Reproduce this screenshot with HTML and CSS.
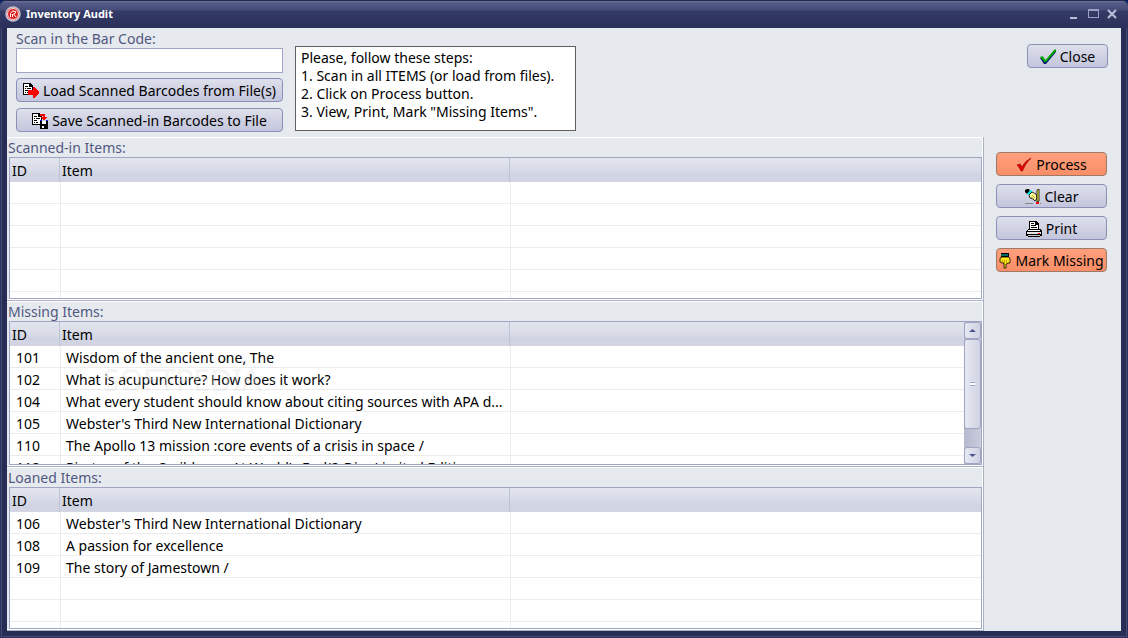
FILE: index.html
```
<!DOCTYPE html>
<html lang="en">
<head>
    <meta charset="UTF-8">
    <meta name="viewport" content="width=device-width, initial-scale=1.0">
    <title>Inventory Audit</title>
    <link rel="stylesheet" href="styles.css">
</head>
<body>
    <div class="window">
        <header class="titlebar">
            <svg class="app-icon" width="16" height="16" viewBox="0 0 16 16">
                <circle cx="8" cy="8" r="7" fill="#e02020" stroke="#c9c6d2" stroke-width="1.5"/>
                <circle cx="8" cy="8" r="5.500" fill="none" stroke="#f4e4e6" stroke-width="1"/>
                <path d="M5.500 11V7.500L7.500 5L10.500 5.500V7L8.500 8L11 11M7.500 8V11" fill="none" stroke="#fff" stroke-width="1"/>
            </svg>
            <h1>Inventory Audit</h1>
            <div class="window-buttons">
                <button type="button" aria-label="Minimize"><svg width="12" height="12" viewBox="0 0 12 12"><path d="M2 9H9V11H2Z" fill="#b9bcd6"/></svg></button>
                <button type="button" aria-label="Maximize"><svg width="12" height="12" viewBox="0 0 12 12" shape-rendering="crispEdges"><path d="M1 1H12V10H1ZM2 3V9H11V3Z" fill="#9a9ec2" fill-rule="evenodd"/></svg></button>
                <button type="button" aria-label="Close window"><svg width="12" height="12" viewBox="0 0 12 12"><path d="M2 2L10 10M10 2L2 10" stroke="#b9bcd6" stroke-width="2.200"/></svg></button>
            </div>
        </header>

        <div class="content">
            <div class="top">
                <form class="scan">
                    <label for="barcode">Scan in the Bar Code:</label>
                    <input type="text" id="barcode">
                    <button type="button" class="btn">
                        <svg width="16" height="16" viewBox="0 0 16 16" shape-rendering="crispEdges">
                            <path d="M0 0H7L10 3V12H0Z" fill="#000"/>
                            <path d="M1 1H6V4H9V11H1Z" fill="#fff"/>
                            <path d="M2 3H5M2 5H3M4 5H8M2 7H5M2 9H3M4 9H6" transform="translate(0 .5)" stroke="#000"/>
                            <path d="M5 7H10V4H11L16 9V10L11 15H10V12H5Z" fill="#f00"/>
                        </svg>
                        Load Scanned Barcodes from File(s)
                    </button>
                    <button type="button" class="btn">
                        <svg width="16" height="16" viewBox="0 0 16 16" shape-rendering="crispEdges">
                            <path d="M0 0H7L10 3V12H0Z" fill="#000"/>
                            <path d="M1 1H6V4H9V11H1Z" fill="#fff"/>
                            <path d="M2 3H5M2 5H3M4 5H8M2 7H5M2 9H3M4 9H6" transform="translate(0 .5)" stroke="#000"/>
                            <path d="M8 1H13V4H15L12 8L9 4H11V3H8Z" fill="#f00"/>
                            <path d="M8 8H16V16H8Z" fill="#000"/>
                            <path d="M10 8H14V11H10ZM10 13H12V15H10Z" fill="#fff"/>
                            <path d="M8 7H10M14 7H16" stroke="#22c"/>
                        </svg>
                        Save Scanned-in Barcodes to File
                    </button>
                </form>

                <div class="steps">
                    Please, follow these steps:<br>
                    1. Scan in all ITEMS (or load from files).<br>
                    2. Click on Process button.<br>
                    3. View, Print, Mark "Missing Items".
                </div>

                <button type="button" class="btn close-btn">
                    <svg width="16" height="16" viewBox="0 0 16 16">
                        <path d="M0 9L2.500 8L5.500 12L14 2L16 1V3L6 15H4Z" fill="#001a70"/>
                        <path d="M0 8L2.500 7L5.500 11L14 1L16 0V2L6 13H4.500Z" fill="#00a800"/>
                    </svg>
                    Close
                </button>
            </div>

            <div class="main">
                <div class="lists">
                    <section class="group">
                        <h2>Scanned-in Items:</h2>
                        <div class="list">
                            <div class="rows">
                                <table>
                                    <colgroup><col class="col-id"><col class="col-item"><col></colgroup>
                                    <thead><tr><th>ID</th><th>Item</th><th></th></tr></thead>
                                    <tbody>
                                        <tr><td></td><td></td><td></td></tr>
                                        <tr><td></td><td></td><td></td></tr>
                                        <tr><td></td><td></td><td></td></tr>
                                        <tr><td></td><td></td><td></td></tr>
                                        <tr><td></td><td></td><td></td></tr>
                                        <tr><td></td><td></td><td></td></tr>
                                    </tbody>
                                </table>
                            </div>
                        </div>
                    </section>

                    <section class="group">
                        <h2>Missing Items:</h2>
                        <div class="list">
                            <div class="rows">
                                <table>
                                    <colgroup><col class="col-id"><col class="col-item"><col></colgroup>
                                    <thead><tr><th>ID</th><th>Item</th><th></th></tr></thead>
                                    <tbody>
                                        <tr><td>101</td><td>Wisdom of the ancient one, The</td><td></td></tr>
                                        <tr><td>102</td><td>What is acupuncture? How does it work?</td><td></td></tr>
                                        <tr><td>104</td><td>What every student should know about citing sources with APA d...</td><td></td></tr>
                                        <tr><td>105</td><td>Webster's Third New International Dictionary</td><td></td></tr>
                                        <tr><td>110</td><td>The Apollo 13 mission :core events of a crisis in space /</td><td></td></tr>
                                        <tr><td>112</td><td>Pirates of the Caribbean: At World's End(2-Disc Limited Edition</td><td></td></tr>
                                    </tbody>
                                </table>
                            </div>
                            <div class="scrollbar">
                                <button type="button" aria-label="Scroll up"><svg width="7" height="3" viewBox="0 0 7 3"><path d="M0 3L3.500 0L7 3Z" fill="#4b5590"/></svg></button>
                                <div class="thumb"><span></span></div>
                                <div class="track"></div>
                                <button type="button" aria-label="Scroll down"><svg width="7" height="3" viewBox="0 0 7 3"><path d="M0 0L3.500 3L7 0Z" fill="#4b5590"/></svg></button>
                            </div>
                            <div class="watermark">SOFTPEDIA</div>
                        </div>
                    </section>

                    <section class="group">
                        <h2>Loaned Items:</h2>
                        <div class="list">
                            <div class="rows">
                                <table>
                                    <colgroup><col class="col-id"><col class="col-item"><col></colgroup>
                                    <thead><tr><th>ID</th><th>Item</th><th></th></tr></thead>
                                    <tbody>
                                        <tr><td>106</td><td>Webster's Third New International Dictionary</td><td></td></tr>
                                        <tr><td>108</td><td>A passion for excellence</td><td></td></tr>
                                        <tr><td>109</td><td>The story of Jamestown /</td><td></td></tr>
                                        <tr><td></td><td></td><td></td></tr>
                                        <tr><td></td><td></td><td></td></tr>
                                        <tr><td></td><td></td><td></td></tr>
                                    </tbody>
                                </table>
                            </div>
                        </div>
                    </section>
                </div>

                <div class="actions">
                    <button type="button" class="btn hot">
                        <svg width="16" height="16" viewBox="0 0 16 16">
                            <path d="M1 8L4 7L6 10Q9 4 15 1Q9 7 6.500 14H5Q4 11 1 8Z" fill="#e80000" stroke="#8c0000" stroke-width=".6"/>
                        </svg>
                        Process
                    </button>
                    <button type="button" class="btn">
                        <svg width="16" height="16" viewBox="0 0 16 16">
                            <path d="M0 1L2 0H4L5 2L2 5L0 3Z" fill="#000"/>
                            <path d="M2 5L5 1L7 2V3L4 6Z" fill="#0dd"/>
                            <path d="M4 6L7 3L11 5L12 9L10 12L8 10L5 9Z" fill="#ffffa0" stroke="#000" stroke-width=".8"/>
                            <path d="M7 6L10 9M6 8L9 10" stroke="#b8a000" stroke-width=".8"/>
                            <path d="M12 1L14 0V12L12 13Z" fill="#fff04a" stroke="#000" stroke-width=".8"/>
                            <path d="M11 13H14V15H11Z" fill="#f00"/>
                            <path d="M0 14.500H8M15 14.500H16" stroke="#888"/>
                        </svg>
                        Clear
                    </button>
                    <button type="button" class="btn">
                        <svg width="16" height="16" viewBox="0 0 16 16" shape-rendering="crispEdges">
                            <path d="M3 0H10L13 3V8H14L16 10V15H14V16H2V15H0V10L2 8H3Z" fill="#000"/>
                            <path d="M4 1H9V4H12V8H4Z" fill="#fff"/>
                            <path d="M5 3H8M5 5H10M5 7H11" transform="translate(0 -.5)" stroke="#000"/>
                            <path d="M2 9H14V10H2Z" fill="#fff"/>
                            <path d="M1 11H15V13H1Z" fill="#e4e4e4"/>
                            <path d="M2 14H14V15H2Z" fill="#c8c8c8"/>
                            <path d="M12 12H14V13H12Z" fill="#e00"/>
                        </svg>
                        Print
                    </button>
                    <button type="button" class="btn hot">
                        <svg width="12" height="16" viewBox="2 0 12 16">
                            <path d="M4 0H12V4H4Z" fill="#000"/>
                            <path d="M4 2H11" stroke="#0cc"/>
                            <path d="M4 4H12L13 6V10H11L10 11H9V15H7V10H5L3 9V6Z" fill="#ffe61a" stroke="#000" stroke-width=".8"/>
                            <path d="M5.500 7V10M7.500 7V11M9.500 7V11" stroke="#a88600" stroke-width=".7"/>
                        </svg>
                        Mark Missing
                    </button>
                </div>
            </div>
        </div>
    </div>
</body>
</html>
```
FILE: styles.css
```
* {
    box-sizing: border-box;
}
body {
    margin: 0;
    background-color: #0a246a;
    font-family: 'Noto Sans', 'Open Sans', sans-serif;
    font-size: 14px;
    line-height: 18px;
    color: #000;
}
button, input {
    font: inherit;
    color: inherit;
}
h1, h2 {
    margin: 0;
    font-size: inherit;
    font-weight: normal;
}
.window {
    display: flex;
    flex-direction: column;
    height: 100vh;
    min-height: 480px;
    padding: 0 7px 7px;
    background-color: #252d54;
    border-radius: 6px 6px 0 0;
    box-shadow: inset 0 0 0 1px #2b3158, inset 0 0 0 2px #434a7c;
}
.titlebar {
    display: flex;
    align-items: center;
    flex: none;
    gap: 5px;
    height: 28px;
    margin: 0 -7px;
    padding: 0 10px 1px 5px;
    border-top: 1px solid #22284a;
    border-radius: 6px 6px 0 0;
    background: linear-gradient(#6e749c 0, #535a86 2px, #464d78 9px, #343b66 10px, #2a305a 100%);
}
.titlebar h1 {
    flex: 1;
    padding-bottom: 1px;
    font-size: 11px;
    font-weight: bold;
    color: #fff;
}
.window-buttons {
    display: flex;
    gap: 7px;
    padding-bottom: 1px;
}
.window-buttons button {
    display: flex;
    padding: 0;
    border: none;
    background: none;
}
.content {
    display: flex;
    flex-direction: column;
    flex: 1;
    min-height: 0;
    background-color: #e6eaee;
}
.top {
    display: flex;
    align-items: flex-start;
    flex: none;
    height: 109px;
    padding: 2px 13px 0 9px;
}
.scan {
    display: flex;
    flex-direction: column;
    width: 267px;
}
.scan label, .group h2 {
    color: #515880;
}
.scan input {
    width: 100%;
    height: 25px;
    margin-bottom: 5px;
    padding: 0 4px;
    border: 1px solid #a0a5c4;
    background-color: #fff;
}
.scan .btn {
    margin-bottom: 6px;
}
.steps {
    width: 281px;
    height: 85px;
    margin: 16px auto 0 12px;
    padding: 2px 5px;
    border: 1px solid #606060;
    background-color: #fff;
}
.btn {
    display: flex;
    align-items: center;
    justify-content: center;
    gap: 4px;
    height: 24px;
    padding: 2px 0 0;
    border: 1px solid #8a8fb8;
    border-radius: 4px;
    background: linear-gradient(#dfe0ec, #d0d2e3 50%, #c3c6dc);
    white-space: nowrap;
}
.btn.hot {
    border-color: #a07868;
    background: linear-gradient(#ffa07c, #fa8e66);
}
.close-btn {
    width: 81px;
    margin-top: 14px;
}
.main {
    display: flex;
    flex: 1;
    min-height: 0;
}
.lists {
    display: grid;
    grid-template-rows: 164fr 166fr 164fr;
    flex: 1;
    min-width: 0;
}
.group {
    display: flex;
    flex-direction: column;
    min-height: 0;
    padding: 0 1px 1px 2px;
    border: 1px solid #a9b2c2;
    border-width: 0 1px 1px 0;
    box-shadow: inset 0 1px #fff, inset -1px -1px #fff;
}
.group h2 {
    flex: none;
    height: 20px;
    padding-top: 2px;
    margin-left: -1px;
}
.list {
    position: relative;
    display: flex;
    flex: 1;
    min-height: 0;
    border: 1px solid #a0a5c4;
    background-color: #fff;
}
.rows {
    flex: 1;
    min-width: 0;
    overflow: hidden;
}
table {
    width: 100%;
    table-layout: fixed;
    border-collapse: separate;
    border-spacing: 0;
}
.col-id {
    width: 51px;
}
.col-item {
    width: 450px;
}
th {
    height: 24px;
    padding: 2px 1px 0;
    background:
        linear-gradient(#bfc3d6, #bfc3d6) right 1px top / 1px 100% no-repeat,
        linear-gradient(#e3e5ee, #d8dae7 50%, #d0d3e2 70%, #d3d5e3);
    font-weight: normal;
    text-align: left;
}
th:first-child {
    padding-left: 2px;
}
td {
    height: 22px;
    padding: 2px 5px 0;
    border: 1px solid #ececec;
    border-width: 0 1px 1px 0;
    white-space: nowrap;
}
td:first-child {
    padding-left: 6px;
}
th:last-child {
    background: linear-gradient(#e3e5ee, #d8dae7 50%, #d0d3e2 70%, #d3d5e3);
}
td:last-child {
    border-right: none;
}
.scrollbar {
    display: flex;
    flex-direction: column;
    width: 17px;
    background: linear-gradient(to right, #b6b9cf, #c9ccdc);
}
.scrollbar button, .thumb {
    display: flex;
    align-items: center;
    justify-content: center;
    flex: none;
    width: 100%;
    height: 17px;
    padding: 0;
    border: 1px solid #9fa4c4;
    border-radius: 3px;
    background: linear-gradient(to right, #e6e8f1, #cfd2e2);
}
.scrollbar .thumb {
    height: 90px;
}
.thumb span {
    width: 5px;
    height: 4px;
    border: 1px solid #9fa4c4;
    border-width: 1px 0;
    background-color: #fff;
}
.track {
    flex: 1;
}
.watermark {
    position: absolute;
    top: 43px;
    left: 92px;
    font-size: 30px;
    line-height: 28px;
    color: rgba(255, 255, 255, 0.3);
    text-shadow: 1px 1px 1px rgba(0, 0, 0, 0.06);
    pointer-events: none;
}
.actions {
    display: flex;
    flex-direction: column;
    gap: 8px;
    width: 137px;
    padding: 15px 14px 0 12px;
}
```
